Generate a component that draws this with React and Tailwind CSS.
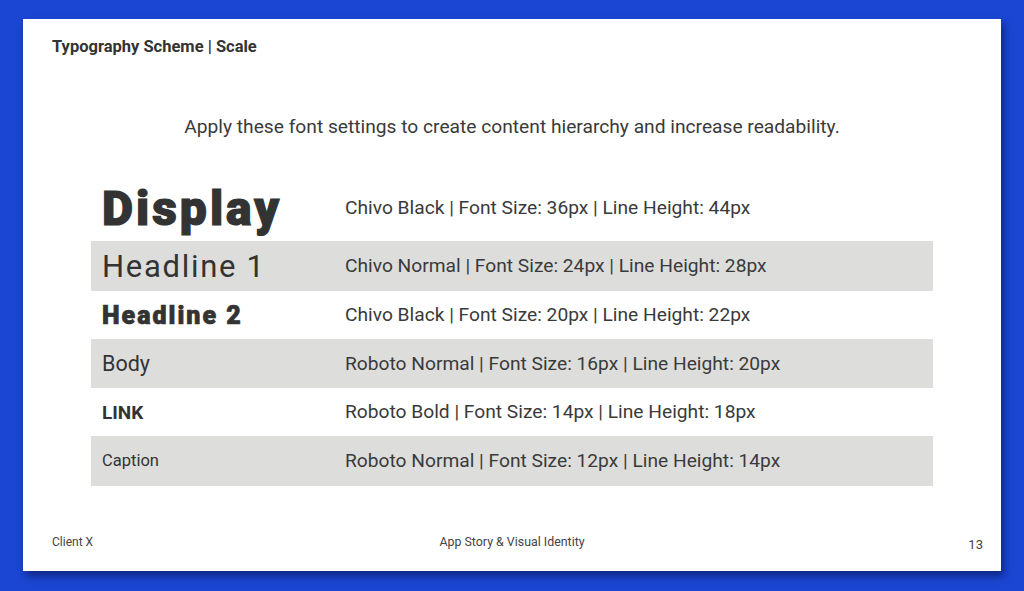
import React from 'react'

const rows = [
  { label: 'Display', spec: 'Chivo Black | Font Size: 36px | Line Height: 44px', h: 'h-[64px]', gray: false, cls: "text-[48px] font-black tracking-[3px] [-webkit-text-stroke:1.2px_#333] font-['Roboto']", sp: '-mt-[3px]' },
  { label: 'Headline 1', spec: 'Chivo Normal | Font Size: 24px | Line Height: 28px', h: 'h-[50px]', gray: true, cls: "text-[31px] font-normal tracking-[1.7px] font-['Roboto']", sp: '' },
  { label: 'Headline 2', spec: 'Chivo Black | Font Size: 20px | Line Height: 22px', h: 'h-[48px]', gray: false, cls: "text-[25px] font-black tracking-[2px] [-webkit-text-stroke:0.7px_#333] font-['Roboto']", sp: '' },
  { label: 'Body', spec: 'Roboto Normal | Font Size: 16px | Line Height: 20px', h: 'h-[49px]', gray: true, cls: "text-[21.5px] font-normal font-['Roboto']", sp: '' },
  { label: 'LINK', spec: 'Roboto Bold | Font Size: 14px | Line Height: 18px', h: 'h-[48px]', gray: false, cls: "text-[19px] font-bold font-['Roboto']", sp: '' },
  { label: 'Caption', spec: 'Roboto Normal | Font Size: 12px | Line Height: 14px', h: 'h-[50px]', gray: true, cls: "text-[16.5px] font-normal font-['Roboto']", sp: '' },
]

const App = () => {
  return (
    <div className="w-[1024px] h-[591px] bg-[#1b46d3] pt-[19px] pl-[23px] font-['Roboto',sans-serif] text-[#333333]">
      <div className="w-[978px] h-[552px] bg-white shadow-[3px_5px_8px_rgba(0,0,30,0.45)] flex flex-col">
        <div className="pt-[18px] pl-[29px] text-[16.5px] leading-[20px] font-bold text-[#333]">
          Typography Scheme | Scale
        </div>
        <div className="mt-[59px] text-center text-[19.2px] leading-[22px] text-[#3a3a3a]">
          Apply these font settings to create content hierarchy and increase readability.
        </div>
        <div className="mt-[39px] ml-[68px] w-[842px] flex flex-col">
          {rows.map(r => (
            <div key={r.label} className={`${r.h} flex items-center ${r.gray ? 'bg-[#dddedc]' : 'bg-white'}`}>
              <div className={`w-[254px] pl-[11px] leading-none text-[#333] ${r.cls}`}>{r.label}</div>
              <div className={`text-[19.2px] leading-[22px] text-[#3a3a3a] ${r.sp}`}>{r.spec}</div>
            </div>
          ))}
        </div>
        <div className="mt-auto mb-[21px] pl-[29px] pr-[18px] flex items-end justify-between text-[#444]">
          <span className="w-[139px] text-[12px] leading-[16px]">Client X</span>
          <span className="text-[12.4px] leading-[16px]">App Story &amp; Visual Identity</span>
          <span className="w-[150px] text-right text-[13px] leading-[16px] -mb-[3px]">13</span>
        </div>
      </div>
    </div>
  )
}

export default App
